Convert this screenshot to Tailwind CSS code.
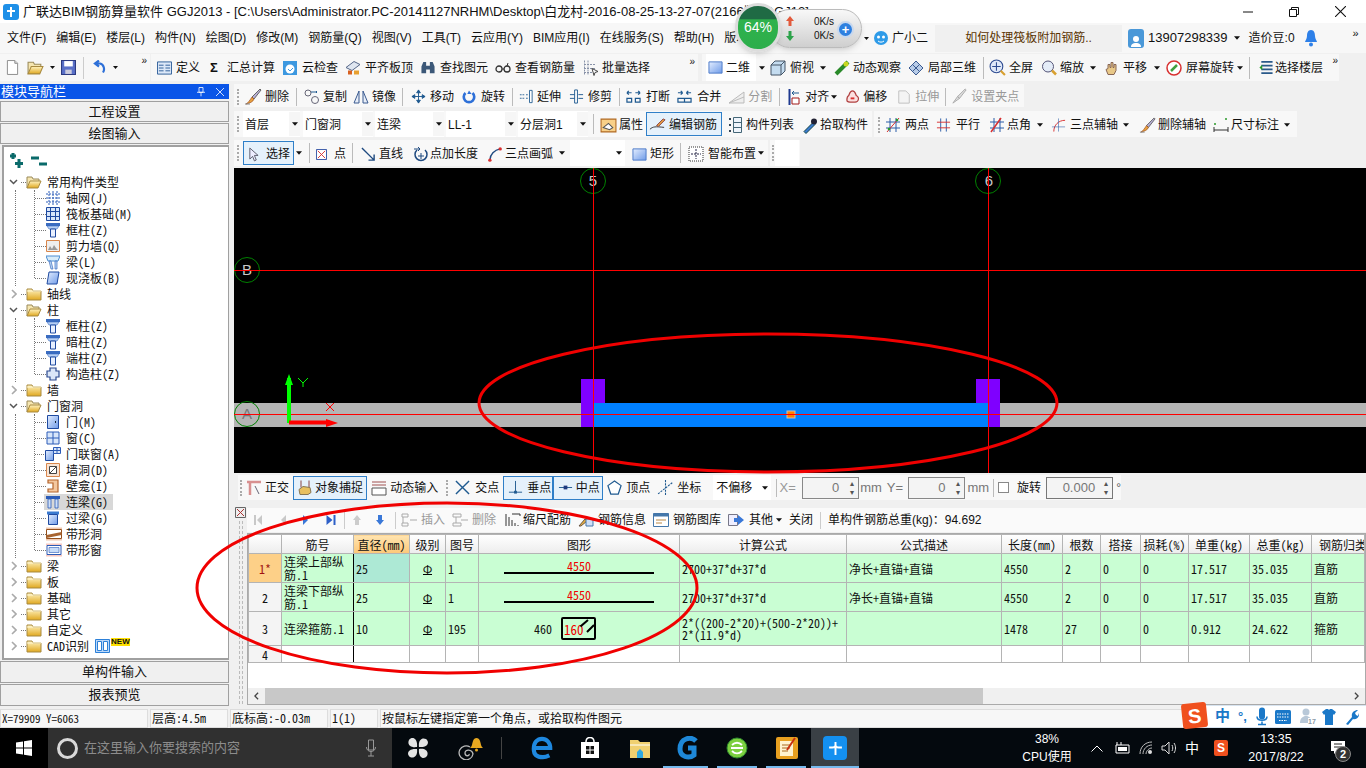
<!DOCTYPE html>
<html lang="zh">
<head>
<meta charset="UTF-8">
<title>广联达BIM钢筋算量软件 GGJ2013</title>
<script src="https://cdn.jsdelivr.net/npm/@tailwindcss/browser@4"></script>
</head>
<body class="bg-[#f0f0f0] overflow-hidden">
<!-- shared icons -->
<svg class="absolute w-0 h-0">
  <defs>
    <linearGradient id="fold" x1="0" y1="0" x2="0" y2="1"><stop offset="0" stop-color="#fff3c0"/><stop offset="1" stop-color="#e0a820"/></linearGradient>
    <linearGradient id="blu" x1="0" y1="0" x2="1" y2="1"><stop offset="0" stop-color="#e4eeff"/><stop offset="1" stop-color="#6f9be8"/></linearGradient>
  </defs>
  <symbol id="dd" viewBox="0 0 7 4"><path d="M0 0h7L3.500 4z" fill="#111"/></symbol>
  <symbol id="fo" viewBox="0 0 16 14"><path d="M1 13V2h5l1 2h6v2" fill="#f6e6b0" stroke="#9a8a5a"/><path d="M1 13l3-7h11l-3 7z" fill="url(#fold)" stroke="#a88a40"/></symbol>
  <symbol id="fc" viewBox="0 0 16 14"><path d="M1 13V2h5l1 2h8v9z" fill="url(#fold)" stroke="#a88a40"/><path d="M1 4h14" stroke="#fff6d0"/></symbol>
  <symbol id="cd" viewBox="0 0 9 6"><path d="M1 1l3.500 3.500L8 1" fill="none" stroke="#555" stroke-width="1.500"/></symbol>
  <symbol id="cr" viewBox="0 0 6 10"><path d="M1 1l4 4-4 4" fill="none" stroke="#aaa" stroke-width="1.600"/></symbol>
  <symbol id="t-col" viewBox="0 0 14 16"><path d="M0 1h14v3H0z" fill="#3a6cc0"/><path d="M1 4h12l-2 3H3z" fill="#b8d0f4" stroke="#3a6cc0" stroke-width=".6"/><path d="M4.500 7h5v8h-5z" fill="#e8f0ff" stroke="#1f4aa0"/></symbol>
  <symbol id="t-grid" viewBox="0 0 14 14"><path d="M3 0v14M7 0v14M11 0v14M0 3h14M0 7h14M0 11h14" stroke="#2c5cb8" stroke-dasharray="2 1"/></symbol>
  <symbol id="t-raft" viewBox="0 0 14 14"><path d="M.5.500h13v13H.5z" fill="#d8e6fa" stroke="#1f4aa0"/><path d="M4.500.5v13M9.500.5v13M.5 4.500h13M.5 9.500h13" stroke="#1f4aa0"/></symbol>
  <symbol id="t-wall" viewBox="0 0 14 14"><path d="M.5 1.500h13v11H.5z" fill="#eee" stroke="#d8864c"/><path d="M2 11l2-4 2 3 2-4 2 3 2 2z" fill="#999"/></symbol>
  <symbol id="t-beam" viewBox="0 0 14 15"><path d="M0 1h14l-2 5H2z" fill="#d8ecfa" stroke="#4a8cd0"/><path d="M3 6h2l2 8H5zM9 6h2v8H9z" fill="#bcd8f4" stroke="#3a6cc0" stroke-width=".7"/></symbol>
  <symbol id="t-slab" viewBox="0 0 14 14"><path d="M3 1h10l-2 12H1z" fill="url(#blu)" stroke="#1f4aa0"/></symbol>
  <symbol id="t-gzz" viewBox="0 0 14 14"><path d="M4 1h6v3h3v6h-3v3H4v-3H1V4h3z" fill="#dbe6f8" stroke="#2c4a90" stroke-width="1.200"/></symbol>
  <symbol id="t-door" viewBox="0 0 12 14"><path d="M.5.500h11v13H.5z" fill="url(#blu)" stroke="#1f4aa0"/><path d="M8.500 6v2" stroke="#123"/></symbol>
  <symbol id="t-win" viewBox="0 0 14 14"><path d="M1 1h12v12H1z" fill="#d8e6fa" stroke="#2c5cb8"/><path d="M7 1v12M1 7h12" stroke="#2c5cb8"/></symbol>
  <symbol id="t-dw" viewBox="0 0 16 14"><path d="M.5 3.500h8v10h-8z" fill="url(#blu)" stroke="#1f4aa0"/><path d="M8.500.5h7v6h-7zM12 .5v6M8.500 3.500h7" fill="#d8e6fa" stroke="#2c5cb8"/></symbol>
  <symbol id="t-hole" viewBox="0 0 14 14"><path d="M.5.500h13v13H.5z" fill="#f8e4d4" stroke="#d8864c"/><path d="M3.500 3.500h7v7h-7z" fill="#fff" stroke="#444"/><path d="M3.500 10.500l7-7" stroke="#444"/></symbol>
  <symbol id="t-niche" viewBox="0 0 12 14"><path d="M1 1h10v12H1V10h5V4H1z" fill="#f4c8a0" stroke="#b4642c" stroke-width="1.200"/></symbol>
  <symbol id="t-ll" viewBox="0 0 14 14"><path d="M0 1h14v3H0z" fill="#2c5cb8"/><path d="M2 4h3v9H2zM9 4h3v9H9z" fill="#cfe0f8" stroke="#2c5cb8" stroke-width=".8"/></symbol>
  <symbol id="t-gl" viewBox="0 0 12 14"><path d="M0 .5h12v3H0z" fill="#3a7ad0"/><path d="M1.500 3.500h9v10h-9z" fill="url(#blu)" stroke="#1f4aa0"/></symbol>
  <symbol id="t-sh" viewBox="0 0 16 14"><path d="M0 .5h16v2H0zM0 11.500h16v2H0z" fill="#f0c8b0"/><path d="M.5 2.500h15v9H.5z" fill="#fff" stroke="#94501c"/><path d="M.5 8l15-3v3l-15 3z" fill="#a86430"/></symbol>
  <symbol id="t-sw" viewBox="0 0 16 14"><path d="M0 .5h16v2H0zM0 11.500h16v2H0z" fill="#f8c8c0"/><path d="M1 2.500h14v9H1z" fill="#fff" stroke="#2c5cb8"/><path d="M3 4.500h10v5H3z" fill="#c8dcf8" stroke="#2c5cb8" stroke-width=".6"/></symbol>
  <symbol id="brush" viewBox="0 0 18 18"><path d="M16 1l1 1-7 9-2-2z" fill="#b8b0d8" stroke="#666"/><path d="M8 9l2 2c-1 3-4 4-8 5 2-1 4-4 6-7z" fill="#e8a040" stroke="#904010" stroke-width=".6"/><path d="M1 16h5" stroke="#888"/></symbol>
  <symbol id="plus2" viewBox="0 0 16 16"><circle cx="7" cy="7" r="6" fill="#dfe8f8" stroke="#2c4a90"/><path d="M7 3v8M3 7h8" stroke="#2c4a90"/><path d="M11 11l4 4" stroke="#d8a030" stroke-width="2"/></symbol>
  <symbol id="square" viewBox="0 0 16 16"><path d="M1 2h14v12H1z" fill="url(#blu)" stroke="#4a78c8"/></symbol>
</svg>

<div class="relative w-[1366px] h-[768px] overflow-hidden flex flex-col text-[12px] text-[#111] font-['Liberation_Sans','Noto_Sans_CJK_SC',sans-serif]">

  <!-- title bar -->
  <div class="h-[23px] bg-white flex items-center pl-[3px] shrink-0 text-[13px]">
    <span class="w-[16px] h-[16px] rounded-[3px] bg-[#1e90e8] flex items-center justify-center mr-[4px]">
      <svg viewBox="0 0 12 12" class="w-[12px] h-[12px]"><path d="M6 1v10M2 5h8" stroke="#fff" stroke-width="2" fill="none"/></svg>
    </span>
    <span class="whitespace-nowrap">广联达BIM钢筋算量软件 GGJ2013 - [C:\Users\Administrator.PC-20141127NRHM\Desktop\白龙村-2016-08-25-13-27-07(2166版本)GJ12]</span>
    <div class="ml-auto flex items-center gap-[36px] pr-[20px]">
      <svg viewBox="0 0 10 10" class="w-[10px] h-[10px]"><path d="M0 5h10" stroke="#111"/></svg>
      <svg viewBox="0 0 10 10" class="w-[10px] h-[10px]"><path d="M.5 2.500h7v7h-7zM2.500 2.500V.5h7v7h-2" fill="none" stroke="#111"/></svg>
      <svg viewBox="0 0 10 10" class="w-[11px] h-[11px]"><path d="M0 0l10 10M10 0L0 10" stroke="#111"/></svg>
    </div>
  </div>

  <!-- menu bar -->
  <div class="h-[30px] bg-[#f7f7f7] flex items-center shrink-0 pl-[7px] relative">
    <div class="flex gap-[10px] whitespace-nowrap">
      <span>文件(F)</span><span>编辑(E)</span><span>楼层(L)</span><span>构件(N)</span><span>绘图(D)</span><span>修改(M)</span><span>钢筋量(Q)</span><span>视图(V)</span><span>工具(T)</span><span>云应用(Y)</span><span>BIM应用(I)</span><span>在线服务(S)</span><span>帮助(H)</span><span>版本号(B)</span>
    </div>
    <div class="absolute left-[864px] top-0 h-full flex items-center whitespace-nowrap">
      <svg class="w-[5px] h-[3px] mr-[4px]"><use href="#dd"/></svg>
      <svg viewBox="0 0 16 16" class="w-[16px] h-[16px] mr-[3px]"><circle cx="8" cy="8" r="7" fill="#2e9be8"/><circle cx="5.500" cy="7" r="1.500" fill="#fff"/><circle cx="10.500" cy="7" r="1.500" fill="#fff"/><path d="M5 11c2 1.500 4 1.500 6 0" stroke="#fff" fill="none"/></svg>
      <span>广小二</span>
      <span class="ml-[7px] w-[187px] h-[27px] bg-[#f0f0f0] flex items-center justify-center text-[#5a3300]">如何处理筏板附加钢筋..</span>
      <span class="ml-[6px] w-[16px] h-[19px] rounded-[3px] bg-[#4a98d8] flex items-end justify-center"><svg viewBox="0 0 12 14" class="w-[12px] h-[14px]"><circle cx="6" cy="5" r="3" fill="#fff"/><path d="M1 13c0-3 2-4 5-4s5 1 5 4z" fill="#fff"/></svg></span>
      <span class="ml-[4px] text-[13px]">13907298339</span>
      <svg class="w-[6px] h-[4px] ml-[6px]"><use href="#dd"/></svg>
      <span class="ml-[9px]">造价豆:0</span>
      <svg viewBox="0 0 12 18" class="w-[12px] h-[18px] ml-[10px]"><path d="M6 1c3 0 4 3 4 6 0 3 2 5 2 6H0c0-1 2-3 2-6 0-3 1-6 4-6z" fill="#2e80e8"/><circle cx="6" cy="15.500" r="2" fill="#2e80e8"/></svg>
      <span class="ml-[36px] -mt-[10px] text-[11px]">»</span>
    </div>
  </div>

  <!-- main toolbar -->
  <div class="h-[29px] shrink-0 flex items-center gap-[1px] whitespace-nowrap">
    <div class="h-[27px] w-[150px] bg-[#f7f7f7] flex items-center pl-[6px] relative">
      <svg viewBox="0 0 14 16" class="w-[13px] h-[15px]"><path d="M1.500.5h8l3 3v12h-11z" fill="#fff" stroke="#888"/><path d="M9.500.5v3h3" fill="#ddd" stroke="#888"/></svg>
      <svg viewBox="0 0 16 14" class="w-[17px] h-[15px] ml-[8px]"><use href="#fo"/></svg>
      <svg class="w-[5px] h-[3px] ml-[6px]"><use href="#dd"/></svg>
      <svg viewBox="0 0 14 14" class="w-[15px] h-[15px] ml-[6px]"><path d="M.5.500h13v13H.5z" fill="#5a70c8" stroke="#2c3a80"/><path d="M3 1h8v5H3z" fill="#fff"/><path d="M4 9h6v4H4z" fill="#ccd"/></svg>
      <i class="w-px h-[22px] bg-[#ccc] ml-[7px]"></i>
      <svg viewBox="0 0 14 14" class="w-[14px] h-[15px] ml-[8px]"><path d="M11 12c2-3 1-8-3-9H4M7 0L3 3l4 3" fill="none" stroke="#2e70d8" stroke-width="2.200"/></svg>
      <svg class="w-[5px] h-[3px] ml-[7px]"><use href="#dd"/></svg>
      <span class="absolute right-[3px] top-[1px] text-[10px] leading-[12px]">»</span>
    </div>
    <div class="h-[27px] flex-1 max-w-[547px] bg-[#f7f7f7] flex items-center pl-[6px]">
      <span class="flex items-center gap-[4px]"><svg viewBox="0 0 16 14" class="w-[15px] h-[14px]"><path d="M.5.500h15v13H.5z" fill="#dce8f8" stroke="#2c5c98"/><path d="M2 4h5M2 7h5M2 10h5M9 4h5M9 7h5M9 10h5" stroke="#2c5c98"/></svg>定义</span>
      <span class="flex items-center gap-[8px] ml-[9px]"><b class="text-[13px] w-[10px] text-center">Σ</b>汇总计算</span>
      <span class="flex items-center gap-[4px] ml-[7px]"><svg viewBox="0 0 16 16" class="w-[16px] h-[16px]"><path d="M1 1h14v14H1z" fill="#3c98e0"/><circle cx="8" cy="9" r="4.500" fill="#fff"/><path d="M6 9l2 2 3-3" stroke="#3c98e0" fill="none"/></svg>云检查</span>
      <span class="flex items-center gap-[4px] ml-[7px]"><svg viewBox="0 0 16 16" class="w-[16px] h-[17px]"><path d="M1 8l8-6 6 3-8 6z" fill="#dfe6f0" stroke="#568"/><path d="M3 11h4v4H3z" fill="#d86020"/><path d="M9 11h5v4H9z" fill="#e8a030"/></svg>平齐板顶</span>
      <span class="flex items-center gap-[4px] ml-[7px]"><svg viewBox="0 0 16 16" class="w-[16px] h-[15px]"><path d="M1 14V7l2-5h3v12zM15 14V7l-2-5h-3v12zM6 6h4v4H6z" fill="#3c5878"/></svg>查找图元</span>
      <span class="flex items-center gap-[4px] ml-[7px]"><svg viewBox="0 0 16 12" class="w-[16px] h-[12px]"><circle cx="4" cy="7" r="3" fill="none" stroke="#333" stroke-width="1.300"/><circle cx="12" cy="7" r="3" fill="none" stroke="#333" stroke-width="1.300"/><path d="M7 7h2M12 4l1-3" stroke="#333"/></svg>查看钢筋量</span>
      <span class="flex items-center gap-[3px] ml-[8px]"><svg viewBox="0 0 16 16" class="w-[16px] h-[17px]"><path d="M1.500 1v14M5 1v14M1 5h12M1 9h12M1 13h8" stroke="#8892a8" stroke-dasharray="2 1"/><path d="M9 9l6 3-3 1-1 3z" fill="#fff" stroke="#444"/></svg>批量选择</span>
      <span class="ml-auto mr-[3px] -mt-[11px] text-[10px] leading-[12px]">»</span>
    </div>
    <div class="h-[27px] w-[637px] ml-[3px] bg-[#f7f7f7] flex items-center pl-[4px] relative">
      <span class="flex items-center gap-[3px] bg-white h-[27px] pl-[2px] w-[50px]"><svg class="w-[15px] h-[15px]"><use href="#square"/></svg>二维</span>
      <svg class="w-[6px] h-[4px] ml-[3px]"><use href="#dd"/></svg>
      <span class="flex items-center gap-[4px] ml-[5px]"><svg viewBox="0 0 16 16" class="w-[16px] h-[16px]"><path d="M1 5l4-4h10v10l-4 4H1z" fill="#c4dcf0" stroke="#456"/><path d="M1 5h10v10M11 5l4-4" fill="none" stroke="#456"/></svg>俯视</span>
      <svg class="w-[6px] h-[4px] ml-[6px]"><use href="#dd"/></svg>
      <span class="flex items-center gap-[3px] ml-[8px]"><svg viewBox="0 0 16 16" class="w-[16px] h-[16px]"><path d="M2 14L14 2" stroke="#2a8a2a" stroke-width="4"/><circle cx="12" cy="4" r="2.500" fill="#c8d820"/></svg>动态观察</span>
      <span class="flex items-center gap-[4px] ml-[7px]"><svg viewBox="0 0 16 16" class="w-[16px] h-[16px]"><path d="M8 1l7 7-7 7-7-7z" fill="#b8cce8" stroke="#3a5a90"/><path d="M4 4l8 8M12 4l-8 8" stroke="#3a5a90"/></svg>局部三维</span>
      <i class="w-px h-[22px] bg-[#bbb] ml-[7px]"></i>
      <span class="flex items-center gap-[3px] ml-[5px]"><svg class="w-[17px] h-[17px]"><use href="#plus2"/></svg>全屏</span>
      <span class="flex items-center gap-[3px] ml-[8px]"><svg viewBox="0 0 16 16" class="w-[16px] h-[17px]"><circle cx="7" cy="7" r="5.500" fill="#e4ecf8" stroke="#557"/><path d="M11 11l4 4" stroke="#d8a030" stroke-width="2.500"/></svg>缩放</span>
      <svg class="w-[6px] h-[4px] ml-[6px]"><use href="#dd"/></svg>
      <span class="flex items-center gap-[3px] ml-[8px]"><svg viewBox="0 0 16 16" class="w-[16px] h-[17px]"><path d="M4 15l-2-5 2-1V5h2v3h1V3h2v5h1V5h2v6l-2 4z" fill="#e8c888" stroke="#865"/></svg>平移</span>
      <svg class="w-[6px] h-[4px] ml-[7px]"><use href="#dd"/></svg>
      <span class="flex items-center gap-[4px] ml-[6px]"><svg viewBox="0 0 16 16" class="w-[16px] h-[16px]"><circle cx="8" cy="8" r="7" fill="#fff" stroke="#d83030" stroke-width="1.500"/><path d="M5 11l6-6" stroke="#40a040" stroke-width="2.500"/></svg>屏幕旋转</span>
      <svg class="w-[6px] h-[4px] ml-[3px]"><use href="#dd"/></svg>
      <i class="w-px h-[22px] bg-[#bbb] ml-[6px]"></i>
      <span class="flex items-center gap-[1px] ml-[8px]"><svg viewBox="0 0 16 16" class="w-[16px] h-[15px]"><path d="M3 2h12M3 6h12M3 10h12M3 14h12" stroke="#2a5a8a" stroke-width="2"/><path d="M1 8l3-3v6z" fill="#2a9a2a"/></svg>选择楼层</span>
      <span class="absolute right-[1px] top-[1px] text-[10px] leading-[12px]">»</span>
    </div>
  </div>
  <div class="h-[2px] shrink-0"></div>

  <!-- work area -->
  <div class="h-[622px] shrink-0 flex">
    <!-- navigation pane -->
    <div class="w-[234px] shrink-0 pr-[5px] flex flex-col">
      <div class="h-[15px] bg-[#0a55e8] text-white flex items-center pl-[1px] leading-none text-[13px] shrink-0">
        <span>模块导航栏</span>
        <svg viewBox="0 0 10 12" class="w-[8px] h-[11px] ml-auto"><path d="M2.500 1h5v6h-5zM0 7h10M5 7v5" fill="none" stroke="#fff"/></svg>
        <svg viewBox="0 0 10 10" class="w-[8px] h-[8px] ml-[11px] mr-[5px]"><path d="M0 0l10 10M10 0L0 10" stroke="#fff"/></svg>
      </div>
      <div class="mt-[2px] h-[21px] shrink-0 bg-[#f0f0f0] border border-[#a0a0a0] flex items-center justify-center text-[13px]">工程设置</div>
      <div class="mt-[1px] h-[21px] shrink-0 bg-[#f0f0f0] border border-[#a0a0a0] flex items-center justify-center text-[13px]">绘图输入</div>
      <div class="mt-[1px] ml-[2px] flex-1 bg-white border-2 border-[#a0a0a0] border-r-[1.500px] font-['Noto_Sans_Mono_CJK_SC','Noto_Sans_CJK_SC',monospace]">
        <div class="h-[27px] flex items-center pl-[4px] gap-[7px]">
          <svg viewBox="0 0 16 16" class="w-[16px] h-[16px]"><path d="M5 0v6M2 3h6M11 6v9M7 10.500h8" stroke="#0a6a6a" stroke-width="3"/></svg>
          <svg viewBox="0 0 16 16" class="w-[16px] h-[16px]"><path d="M0 5h8M8 11h8" stroke="#0a6a6a" stroke-width="3"/></svg>
        </div>
        <div class="pl-[4px]">
          <div class="h-4 flex items-center"><svg class="w-[9px] h-[6px] ml-[1px]"><use href="#cd"/></svg><i class="w-[5px] border-t border-dotted border-[#777] ml-[3px]"></i><svg class="w-[16px] h-[14px]"><use href="#fo"/></svg><span class="ml-[5px]">常用构件类型</span></div>
          <div class="relative ml-[27px]">
            <i class="absolute -left-[20px] top-0 bottom-0 border-l border-dotted border-[#777]"></i>
            <i class="absolute left-[-1px] top-0 bottom-2 border-l border-dotted border-[#777]"></i>
            <div class="h-4 flex items-center"><i class="w-[11px] border-t border-dotted border-[#777]"></i><svg class="w-[14px] h-[14px]"><use href="#t-grid"/></svg><span class="ml-[6px]">轴网(J)</span></div>
            <div class="h-4 flex items-center"><i class="w-[11px] border-t border-dotted border-[#777]"></i><svg class="w-[14px] h-[14px]"><use href="#t-raft"/></svg><span class="ml-[6px]">筏板基础(M)</span></div>
            <div class="h-4 flex items-center"><i class="w-[11px] border-t border-dotted border-[#777]"></i><svg class="w-[14px] h-[16px]"><use href="#t-col"/></svg><span class="ml-[6px]">框柱(Z)</span></div>
            <div class="h-4 flex items-center"><i class="w-[11px] border-t border-dotted border-[#777]"></i><svg class="w-[14px] h-[14px]"><use href="#t-wall"/></svg><span class="ml-[6px]">剪力墙(Q)</span></div>
            <div class="h-4 flex items-center"><i class="w-[11px] border-t border-dotted border-[#777]"></i><svg class="w-[14px] h-[15px]"><use href="#t-beam"/></svg><span class="ml-[6px]">梁(L)</span></div>
            <div class="h-4 flex items-center"><i class="w-[11px] border-t border-dotted border-[#777]"></i><svg class="w-[14px] h-[14px]"><use href="#t-slab"/></svg><span class="ml-[6px]">现浇板(B)</span></div>
          </div>
          <div class="h-4 flex items-center"><svg class="w-[6px] h-[10px] ml-[3px]"><use href="#cr"/></svg><i class="w-[5px] border-t border-dotted border-[#777] ml-[4px]"></i><svg class="w-[16px] h-[14px]"><use href="#fc"/></svg><span class="ml-[5px]">轴线</span></div>
          <div class="h-4 flex items-center"><svg class="w-[9px] h-[6px] ml-[1px]"><use href="#cd"/></svg><i class="w-[5px] border-t border-dotted border-[#777] ml-[3px]"></i><svg class="w-[16px] h-[14px]"><use href="#fo"/></svg><span class="ml-[5px]">柱</span></div>
          <div class="relative ml-[27px]">
            <i class="absolute -left-[20px] top-0 bottom-0 border-l border-dotted border-[#777]"></i>
            <i class="absolute left-[-1px] top-0 bottom-2 border-l border-dotted border-[#777]"></i>
            <div class="h-4 flex items-center"><i class="w-[11px] border-t border-dotted border-[#777]"></i><svg class="w-[14px] h-[16px]"><use href="#t-col"/></svg><span class="ml-[6px]">框柱(Z)</span></div>
            <div class="h-4 flex items-center"><i class="w-[11px] border-t border-dotted border-[#777]"></i><svg class="w-[14px] h-[16px]"><use href="#t-col"/></svg><span class="ml-[6px]">暗柱(Z)</span></div>
            <div class="h-4 flex items-center"><i class="w-[11px] border-t border-dotted border-[#777]"></i><svg class="w-[14px] h-[16px]"><use href="#t-col"/></svg><span class="ml-[6px]">端柱(Z)</span></div>
            <div class="h-4 flex items-center"><i class="w-[11px] border-t border-dotted border-[#777]"></i><svg class="w-[14px] h-[14px]"><use href="#t-gzz"/></svg><span class="ml-[6px]">构造柱(Z)</span></div>
          </div>
          <div class="h-4 flex items-center"><svg class="w-[6px] h-[10px] ml-[3px]"><use href="#cr"/></svg><i class="w-[5px] border-t border-dotted border-[#777] ml-[4px]"></i><svg class="w-[16px] h-[14px]"><use href="#fc"/></svg><span class="ml-[5px]">墙</span></div>
          <div class="h-4 flex items-center"><svg class="w-[9px] h-[6px] ml-[1px]"><use href="#cd"/></svg><i class="w-[5px] border-t border-dotted border-[#777] ml-[3px]"></i><svg class="w-[16px] h-[14px]"><use href="#fo"/></svg><span class="ml-[5px]">门窗洞</span></div>
          <div class="relative ml-[27px]">
            <i class="absolute -left-[20px] top-0 bottom-0 border-l border-dotted border-[#777]"></i>
            <i class="absolute left-[-1px] top-0 bottom-2 border-l border-dotted border-[#777]"></i>
            <div class="h-4 flex items-center"><i class="w-[11px] border-t border-dotted border-[#777]"></i><svg class="w-[14px] h-[14px]"><use href="#t-door"/></svg><span class="ml-[6px]">门(M)</span></div>
            <div class="h-4 flex items-center"><i class="w-[11px] border-t border-dotted border-[#777]"></i><svg class="w-[14px] h-[14px]"><use href="#t-win"/></svg><span class="ml-[6px]">窗(C)</span></div>
            <div class="h-4 flex items-center"><i class="w-[11px] border-t border-dotted border-[#777]"></i><svg class="w-[16px] h-[14px] -ml-[1px] -mr-[1px]"><use href="#t-dw"/></svg><span class="ml-[6px]">门联窗(A)</span></div>
            <div class="h-4 flex items-center"><i class="w-[11px] border-t border-dotted border-[#777]"></i><svg class="w-[14px] h-[14px]"><use href="#t-hole"/></svg><span class="ml-[6px]">墙洞(D)</span></div>
            <div class="h-4 flex items-center"><i class="w-[11px] border-t border-dotted border-[#777]"></i><svg class="w-[14px] h-[14px]"><use href="#t-niche"/></svg><span class="ml-[6px]">壁龛(I)</span></div>
            <div class="h-4 flex items-center"><i class="w-[9px] border-t border-dotted border-[#777]"></i><span class="flex items-center bg-[#d8d8d8] h-4 pl-[2px] pr-[5px]"><svg class="w-[14px] h-[14px]"><use href="#t-ll"/></svg><span class="ml-[6px]">连梁(G)</span></span></div>
            <div class="h-4 flex items-center"><i class="w-[11px] border-t border-dotted border-[#777]"></i><svg class="w-[14px] h-[14px]"><use href="#t-gl"/></svg><span class="ml-[6px]">过梁(G)</span></div>
            <div class="h-4 flex items-center"><i class="w-[11px] border-t border-dotted border-[#777]"></i><svg class="w-[16px] h-[14px] -mr-[2px]"><use href="#t-sh"/></svg><span class="ml-[6px]">带形洞</span></div>
            <div class="h-4 flex items-center"><i class="w-[11px] border-t border-dotted border-[#777]"></i><svg class="w-[16px] h-[14px] -mr-[2px]"><use href="#t-sw"/></svg><span class="ml-[6px]">带形窗</span></div>
          </div>
          <div class="h-4 flex items-center"><svg class="w-[6px] h-[10px] ml-[3px]"><use href="#cr"/></svg><i class="w-[5px] border-t border-dotted border-[#777] ml-[4px]"></i><svg class="w-[16px] h-[14px]"><use href="#fc"/></svg><span class="ml-[5px]">梁</span></div>
          <div class="h-4 flex items-center"><svg class="w-[6px] h-[10px] ml-[3px]"><use href="#cr"/></svg><i class="w-[5px] border-t border-dotted border-[#777] ml-[4px]"></i><svg class="w-[16px] h-[14px]"><use href="#fc"/></svg><span class="ml-[5px]">板</span></div>
          <div class="h-4 flex items-center"><svg class="w-[6px] h-[10px] ml-[3px]"><use href="#cr"/></svg><i class="w-[5px] border-t border-dotted border-[#777] ml-[4px]"></i><svg class="w-[16px] h-[14px]"><use href="#fc"/></svg><span class="ml-[5px]">基础</span></div>
          <div class="h-4 flex items-center"><svg class="w-[6px] h-[10px] ml-[3px]"><use href="#cr"/></svg><i class="w-[5px] border-t border-dotted border-[#777] ml-[4px]"></i><svg class="w-[16px] h-[14px]"><use href="#fc"/></svg><span class="ml-[5px]">其它</span></div>
          <div class="h-4 flex items-center"><svg class="w-[6px] h-[10px] ml-[3px]"><use href="#cr"/></svg><i class="w-[5px] border-t border-dotted border-[#777] ml-[4px]"></i><svg class="w-[16px] h-[14px]"><use href="#fc"/></svg><span class="ml-[5px]">自定义</span></div>
          <div class="h-4 flex items-center"><svg class="w-[6px] h-[10px] ml-[3px]"><use href="#cr"/></svg><i class="w-[5px] border-t border-dotted border-[#777] ml-[4px]"></i><svg class="w-[16px] h-[14px]"><use href="#fc"/></svg><span class="ml-[5px]">CAD识别</span>
            <svg viewBox="0 0 15 14" class="w-[15px] h-[14px] ml-[6px]"><path d="M.5.500h14v13H.5z" fill="#bcd8f8" stroke="#2c80d8"/><path d="M2.500 2.500h4v9h-4zM8.500 2.500h4v9h-4z" fill="#fff" stroke="#2c80d8"/></svg>
            <span class="bg-[#ffe000] text-[8px] leading-[8px] font-bold ml-[1px] -mt-[8px] font-['Liberation_Sans']">NEW</span>
          </div>
        </div>
      </div>
      <div class="mt-[1px] h-[22px] shrink-0 bg-[#f0f0f0] border border-[#a0a0a0] flex items-center justify-center text-[13px]">单构件输入</div>
      <div class="mt-[1px] h-[22px] shrink-0 bg-[#f0f0f0] border border-[#a0a0a0] flex items-center justify-center text-[13px]">报表预览</div>
    </div>

    <!-- right side -->
    <div class="flex-1 flex flex-col whitespace-nowrap min-w-0">
      <div class="h-[23px] w-[790px] shrink-0 bg-[#f8f8f8] flex items-center pl-[3px] pt-[2px]">
        <i class="h-[16px] border-l-2 border-dotted border-[#aaa]"></i>
        <span class="flex items-center gap-[3px] ml-[5px]"><svg class="w-[18px] h-[18px]"><use href="#brush"/></svg>删除</span>
        <i class="w-px h-[18px] bg-[#bbb] ml-[7px]"></i>
        <span class="flex items-center gap-[3px] ml-[7px]"><svg viewBox="0 0 16 16" class="w-[16px] h-[16px]"><circle cx="4" cy="4" r="3" fill="none" stroke="#667"/><circle cx="11" cy="11" r="3.500" fill="none" stroke="#667"/><path d="M7 3h6l-1-1M13 3l-1 1" fill="none" stroke="#1f5a90"/></svg>复制</span>
        <span class="flex items-center gap-[3px] ml-[6px]"><svg viewBox="0 0 16 16" class="w-[16px] h-[16px]"><path d="M6 2L1 14h5zM10 2l5 12h-5z" fill="#e8eef8" stroke="#3a5a90"/></svg>镜像</span>
        <i class="w-px h-[18px] bg-[#bbb] ml-[6px]"></i>
        <span class="flex items-center gap-[4px] ml-[8px]"><svg viewBox="0 0 16 16" class="w-[15px] h-[15px]"><path d="M8 1v14M1 8h14M8 1L6 4h4zM8 15l-2-3h4zM1 8l3-2v4zM15 8l-3-2v4z" fill="#1f5a90" stroke="#1f5a90"/></svg>移动</span>
        <span class="flex items-center gap-[5px] ml-[8px]"><svg viewBox="0 0 16 16" class="w-[14px] h-[15px]"><path d="M4 4a6 6 0 1 0 8 0" fill="none" stroke="#2e70d8" stroke-width="3"/><path d="M8 1l3 4H6z" fill="#2e70d8"/></svg>旋转</span>
        <i class="w-px h-[18px] bg-[#bbb] ml-[7px]"></i>
        <span class="flex items-center gap-[4px] ml-[6px]"><svg viewBox="0 0 16 16" class="w-[14px] h-[15px]"><path d="M12 1h3v14h-3z" fill="#fff" stroke="#1f5a90"/><path d="M1 6h6M1 10h6M8 6h3M8 10h3" stroke="#1f5a90" stroke-dasharray="2 1"/></svg>延伸</span>
        <span class="flex items-center gap-[4px] ml-[8px]"><svg viewBox="0 0 16 16" class="w-[15px] h-[15px]"><path d="M6 1h3v14H6z" fill="#fff" stroke="#1f5a90"/><path d="M1 6h5M1 10h5M10 6h5M10 10h5" stroke="#1f5a90"/></svg>修剪</span>
        <i class="w-px h-[18px] bg-[#bbb] ml-[7px]"></i>
        <span class="flex items-center gap-[5px] ml-[6px]"><svg viewBox="0 0 16 16" class="w-[15px] h-[15px]"><path d="M1 4h5M10 4h5M1 4l2-2M1 4l2 2M15 4l-2-2M15 4l-2 2M1 10h5v4H1zM10 10h5v4h-5z" fill="none" stroke="#1f5a90" stroke-width="1.300"/></svg>打断</span>
        <span class="flex items-center gap-[5px] ml-[7px]"><svg viewBox="0 0 16 16" class="w-[15px] h-[15px]"><path d="M1 4h5M10 4h5M6 4L4 2M6 4L4 6M10 4l2-2M10 4l2 2M1 10h14v4H1zM8 10v4" fill="none" stroke="#1f5a90" stroke-width="1.300"/></svg>合并</span>
        <span class="flex items-center gap-[2px] ml-[7px] text-[#999]"><svg viewBox="0 0 18 16" class="w-[18px] h-[16px]"><path d="M1 14L16 3v11zM1 14l15-6" fill="#eee" stroke="#bbb"/></svg>分割</span>
        <i class="w-px h-[18px] bg-[#bbb] ml-[7px]"></i>
        <span class="flex items-center gap-[5px] ml-[8px]"><svg viewBox="0 0 12 16" class="w-[12px] h-[16px]"><path d="M1.500 0v16" stroke="#1f3a90" stroke-width="2"/><path d="M4 9h7v6H4z" fill="#fff" stroke="#a01818"/><path d="M4 4h7M4 4l2-2M4 4l2 2" fill="none" stroke="#1f5a90"/></svg>对齐</span>
        <svg class="w-[6px] h-[4px] ml-[2px]"><use href="#dd"/></svg>
        <span class="flex items-center gap-[3px] ml-[8px]"><svg viewBox="0 0 16 16" class="w-[15px] h-[15px]"><path d="M8 2c3 0 3 3 4 5 2 1 3 3 2 5s-2 2-6 2-6 0-6-2 0-4 2-5c1-2 1-5 4-5z" fill="#fbe0e0" stroke="#b04040" stroke-width="1.300"/><path d="M6 10h4" stroke="#d83030" stroke-width="2"/></svg>偏移</span>
        <span class="flex items-center gap-[4px] ml-[10px] text-[#999]"><svg viewBox="0 0 16 16" class="w-[14px] h-[16px]"><path d="M2 1h8l4 4v10H2z" fill="#f4f4f4" stroke="#bbb"/></svg>拉伸</span>
        <i class="w-px h-[18px] bg-[#bbb] ml-[6px]"></i>
        <span class="flex items-center gap-[3px] ml-[5px] text-[#999]"><svg viewBox="0 0 18 18" class="w-[17px] h-[17px]"><path d="M15 1l1 1-7 9-2-2zM7 9l2 2-7 5z" fill="#ddd" stroke="#aaa"/></svg>设置夹点</span>
      </div>

      <!-- row 2 -->
      <div class="h-[26px] shrink-0 mt-[4px] flex">
        <div class="w-[638px] bg-[#f8f8f8] flex items-center pl-[3px]">
          <i class="h-[16px] border-l-2 border-dotted border-[#aaa] mr-[4px]"></i>
          <span class="w-[57px] h-[26px] bg-white flex items-center pl-[2px] justify-between pt-[2px]">首层<span class="w-[11px] h-[24px] -mt-[2px] bg-[#f6f6f6] flex items-center justify-center"><svg class="w-[6px] h-[4px]"><use href="#dd"/></svg></span></span>
          <span class="w-[70px] h-[26px] bg-white flex items-center pl-[2px] justify-between ml-[3px] pt-[2px]">门窗洞<span class="w-[11px] h-[24px] -mt-[2px] bg-[#f6f6f6] flex items-center justify-center"><svg class="w-[6px] h-[4px]"><use href="#dd"/></svg></span></span>
          <span class="w-[69px] h-[26px] bg-white flex items-center pl-[2px] justify-between ml-[2px] pt-[2px]">连梁<span class="w-[11px] h-[24px] -mt-[2px] bg-[#f6f6f6] flex items-center justify-center"><svg class="w-[6px] h-[4px]"><use href="#dd"/></svg></span></span>
          <span class="w-[70px] h-[26px] bg-white flex items-center pl-[2px] justify-between ml-[2px] pt-[2px]">LL-1<span class="w-[11px] h-[24px] -mt-[2px] bg-[#f6f6f6] flex items-center justify-center"><svg class="w-[6px] h-[4px]"><use href="#dd"/></svg></span></span>
          <span class="w-[70px] h-[26px] bg-white flex items-center pl-[2px] justify-between ml-[2px] pt-[2px]">分层洞1<span class="w-[11px] h-[24px] -mt-[2px] bg-[#f6f6f6] flex items-center justify-center"><svg class="w-[6px] h-[4px]"><use href="#dd"/></svg></span></span>
          <i class="w-px h-[20px] bg-[#bbb] ml-[5px]"></i>
          <span class="flex items-center gap-[2px] ml-[6px] pt-[2px]"><svg viewBox="0 0 16 16" class="w-[17px] h-[17px]"><path d="M1 2h14v12H1z" fill="#f8d088" stroke="#b06820"/><path d="M3 10l5-4 4 4-3 2z" fill="#fff" stroke="#555"/></svg>属性</span>
          <span class="flex items-center gap-[3px] ml-[3px] w-[76px] h-[24px] bg-[#e5f1fb] border border-[#2f7fc8] pl-[2px] pt-[2px]"><svg viewBox="0 0 18 18" class="w-[17px] h-[17px] shrink-0"><path d="M1 13c3-3 6-3 15-2" fill="none" stroke="#333"/><path d="M8 9l7-7 2 1-7 7z" fill="#e8a040" stroke="#844"/></svg>编辑钢筋</span>
          <span class="flex items-center gap-[3px] ml-[5px] pt-[2px]"><svg viewBox="0 0 16 16" class="w-[16px] h-[16px]"><path d="M2 1h2v2H2zM2 7h2v2H2zM2 13h2v2H2z" fill="#345"/><path d="M6.500.5h8v15h-8zM6.500 5.500h8M6.500 10.500h8" fill="#eef4fb" stroke="#467"/></svg>构件列表</span>
          <span class="flex items-center gap-[2px] ml-[8px] pt-[2px]"><svg viewBox="0 0 16 16" class="w-[16px] h-[17px]"><path d="M2 14l9-9 2 2-9 9z" fill="#3a7ad0" stroke="#144"/><circle cx="12" cy="4" r="3" fill="#223"/></svg>拾取构件</span>
        </div>
        <div class="w-[423px] ml-[2px] bg-[#f8f8f8] flex items-center pl-[4px] pt-[2px]">
          <i class="h-[16px] border-l-2 border-dotted border-[#aaa]"></i>
          <span class="flex items-center gap-[4px] ml-[5px]"><svg viewBox="0 0 16 16" class="w-[16px] h-[16px]"><path d="M1 5h14M1 11h14M5 1v14M11 1v14" stroke="#2a5ca8"/><path d="M2 15L14 1" stroke="#d83030"/><circle cx="4" cy="12" r="1.300" fill="#2a9a2a"/><circle cx="12" cy="3" r="1.300" fill="#2a9a2a"/></svg>两点</span>
          <span class="flex items-center gap-[5px] ml-[7px]"><svg viewBox="0 0 16 16" class="w-[15px] h-[16px]"><path d="M5 1v14M11 1v14" stroke="#2a5ca8"/><path d="M1 5h14M1 11h14" stroke="#d83030"/></svg>平行</span>
          <span class="flex items-center gap-[2px] ml-[9px]"><svg viewBox="0 0 16 16" class="w-[16px] h-[16px]"><path d="M5 1v14M11 1v14M1 5h14M1 11h14" stroke="#2a5ca8"/><path d="M2 15L12 1" stroke="#d83030" stroke-width="1.500"/></svg>点角</span>
          <svg class="w-[6px] h-[4px] ml-[6px]"><use href="#dd"/></svg>
          <span class="flex items-center gap-[4px] ml-[8px]"><svg viewBox="0 0 16 16" class="w-[15px] h-[16px]"><path d="M3 15C3 8 8 3 15 3" fill="none" stroke="#d83030"/><path d="M1 10h14M8 1v14" stroke="#2a5ca8" stroke-width=".6"/></svg>三点辅轴</span>
          <svg class="w-[6px] h-[4px] ml-[5px]"><use href="#dd"/></svg>
          <span class="flex items-center gap-[2px] ml-[10px]"><svg class="w-[17px] h-[17px]"><use href="#brush"/></svg>删除辅轴</span>
          <span class="flex items-center gap-[2px] ml-[7px]"><svg viewBox="0 0 16 16" class="w-[16px] h-[16px]"><path d="M1 10v5M15 10v5M1 13h14" stroke="#333"/><circle cx="2" cy="7" r="1" fill="#2a9a2a"/><circle cx="13" cy="2" r="1" fill="#2a9a2a"/></svg>尺寸标注</span>
          <svg class="w-[6px] h-[4px] ml-[5px]"><use href="#dd"/></svg>
        </div>
      </div>

      <!-- row 3 -->
      <div class="h-[26px] shrink-0 mt-[3px] flex">
        <div class="w-[534px] bg-[#f8f8f8] flex items-center pl-[3px]">
          <i class="h-[16px] border-l-2 border-dotted border-[#aaa]"></i>
          <span class="flex items-center gap-[7px] ml-[4px] w-[51px] h-[24px] bg-[#e5f1fb] border border-[#2f7fc8] pl-[4px] pt-[2px]"><svg viewBox="0 0 12 16" class="w-[11px] h-[15px] shrink-0"><path d="M2 1v12l3-3 2 5 2-1-2-5h4z" fill="#eef" stroke="#556"/></svg>选择</span>
          <svg class="w-[6px] h-[4px] ml-[2px]"><use href="#dd"/></svg>
          <i class="w-px h-[20px] bg-[#bbb] ml-[7px]"></i>
          <span class="flex items-center gap-[7px] ml-[6px] pt-[2px]"><svg viewBox="0 0 12 12" class="w-[11px] h-[11px]"><path d="M.5.500h11v11H.5z" fill="#fff" stroke="#2a4aa0"/><path d="M2 2l8 8M10 2l-8 8" stroke="#d83030"/></svg>点</span>
          <i class="w-px h-[20px] bg-[#bbb] ml-[6px]"></i>
          <span class="flex items-center gap-[3px] ml-[8px] pt-[2px]"><svg viewBox="0 0 16 16" class="w-[15px] h-[15px]"><path d="M1 1l13 13M14 8v6H8" fill="none" stroke="#1f4a80" stroke-width="1.500"/></svg>直线</span>
          <span class="flex items-center gap-[1px] ml-[10px] pt-[2px]"><svg viewBox="0 0 16 16" class="w-[16px] h-[16px]"><path d="M4 4a6 6 0 1 0 8 0" fill="none" stroke="#1f4a80" stroke-width="1.500"/><path d="M1 3h6l-2-2M7 3L5 5M8 7v6M5 10h6" fill="none" stroke="#1f4a80"/></svg>点加长度</span>
          <span class="flex items-center gap-[2px] ml-[10px] pt-[2px]"><svg viewBox="0 0 16 16" class="w-[15px] h-[15px]"><path d="M2 14C2 8 7 3 13 2" fill="none" stroke="#1f4a80" stroke-width="1.500"/><circle cx="2" cy="14" r="1.800" fill="#d83030"/><circle cx="13" cy="2" r="1.800" fill="#d83030"/></svg>三点画弧</span>
          <svg class="w-[6px] h-[4px] ml-[6px]"><use href="#dd"/></svg>
          <span class="w-[55px] h-[26px] bg-white ml-[5px] flex items-center justify-end pr-[3px]"><svg class="w-[6px] h-[4px]"><use href="#dd"/></svg></span>
          <span class="flex items-center gap-[3px] ml-[7px] pt-[2px]"><svg class="w-[15px] h-[15px]"><use href="#square"/></svg>矩形</span>
          <i class="w-px h-[20px] bg-[#bbb] ml-[6px]"></i>
          <span class="flex items-center gap-[4px] ml-[7px] pt-[2px]"><svg viewBox="0 0 16 16" class="w-[16px] h-[16px]"><path d="M1 1h14v14H1z" fill="#fff" stroke="#333" stroke-dasharray="1 1"/><path d="M8 3v10M3 8h10" stroke="#224" stroke-dasharray="2 1"/></svg>智能布置</span>
          <svg class="w-[6px] h-[4px] ml-[2px]"><use href="#dd"/></svg>
        </div>
        <div class="w-[30px] ml-[2px] bg-[#f8f8f8] flex items-center pl-[2px]">
          <i class="h-[16px] border-l-2 border-dotted border-[#aaa]"></i>
          <span class="w-[24px] h-[26px] bg-white ml-[1px]"></span>
        </div>
      </div>

      <div class="h-[305px] shrink-0 mt-[2px] bg-black">
        <svg viewBox="234 168 1132 305" class="w-[1132px] h-[305px] block">
          <rect x="234" y="403" width="1132" height="24" fill="#b4b4b4"/>
          <rect x="581" y="379" width="24" height="48" fill="#7f00ff"/>
          <rect x="976" y="379" width="24" height="48" fill="#7f00ff"/>
          <rect x="593" y="403" width="396" height="24" fill="#0080ff"/>
          <rect x="787" y="411" width="8" height="7" fill="#ff8000" stroke="#c0c0c0"/>
          <g fill="none" stroke="#008000"><circle cx="593" cy="181" r="12.500"/><circle cx="988" cy="181" r="12.500"/><circle cx="247" cy="270" r="12.500"/><circle cx="247" cy="414" r="12.500"/></g>
          <g fill="#c8c8c8" font-size="15" text-anchor="middle" font-family="Liberation Sans"><text x="593" y="186">5</text><text x="989" y="186">6</text><text x="247" y="275">B</text><text x="247" y="419" fill="#777">A</text></g>
          <path d="M593.500 168V473M988.500 168V473" stroke="#ff0000"/>
          <path d="M234 270.500H1366M234 414.500H1366" stroke="#ff0000"/>
          <path d="M289 423V378" stroke="#00ff00" stroke-width="4"/><path d="M289 374l-4 11h8z" fill="#00ff00"/>
          <path d="M289 422.500H330" stroke="#ff0000" stroke-width="4"/><path d="M338 423l-12-4v8z" fill="#ff0000"/>
          <path d="M298 378l5 5 5-5M303 383v4" stroke="#00ff00" fill="none"/>
          <path d="M326 403l8 8M334 403l-8 8" stroke="#ff0000"/>
        </svg>
      </div>

      <!-- snap toolbar -->
      <div class="h-[25px] shrink-0 mt-[2px] ml-[4px] w-[883px] bg-[#f8f8f8] flex items-center pl-[2px]">
        <i class="h-[16px] border-l-2 border-dotted border-[#aaa]"></i>
        <span class="flex items-center gap-[3px] ml-[4px]"><svg viewBox="0 0 16 16" class="w-[16px] h-[16px]"><path d="M1 2h14M4 2v13" stroke="#d89090" stroke-width="2.500"/><path d="M9 6l4 8" stroke="#667"/></svg>正交</span>
        <span class="flex items-center gap-[2px] ml-[4px] w-[75px] h-[24px] bg-[#e5f1fb] border border-[#2f7fc8] pl-[3px]"><svg viewBox="0 0 16 16" class="w-[16px] h-[17px] shrink-0"><path d="M4 1v7M12 1v7" stroke="#844"/><path d="M3 15l-1-5 4-3 7 1 1 5-3 2z" fill="#e8c060" stroke="#875"/></svg>对象捕捉</span>
        <span class="flex items-center gap-[3px] ml-[4px]"><svg viewBox="0 0 16 16" class="w-[16px] h-[16px]"><path d="M1 2h14M1 5h14" stroke="#a05050"/><path d="M1 8h14v7H1z" fill="#fff" stroke="#555"/></svg>动态输入</span>
        <i class="h-[16px] border-l-2 border-dotted border-[#aaa] ml-[8px]"></i>
        <span class="flex items-center gap-[5px] ml-[7px]"><svg viewBox="0 0 16 16" class="w-[15px] h-[15px]"><path d="M1 1l14 14M15 1L1 15" stroke="#1f5a90" stroke-width="1.500"/></svg>交点</span>
        <span class="flex items-center gap-[4px] ml-[4px] w-[50px] h-[24px] bg-[#e5f1fb] border border-[#2f7fc8] pl-[4px]"><svg viewBox="0 0 16 16" class="w-[15px] h-[15px] shrink-0"><path d="M8 1v11M1 13h14" stroke="#1f5a90"/><rect x="6.500" y="11.500" width="3" height="3" fill="#1f5a90"/></svg>垂点</span>
        <span class="flex items-center gap-[3px] w-[51px] h-[24px] bg-[#e5f1fb] border border-[#2f7fc8] pl-[4px]"><svg viewBox="0 0 16 16" class="w-[15px] h-[15px] shrink-0"><path d="M1 8h14" stroke="#1f5a90"/><rect x="6" y="6" width="4" height="4" fill="#1f3a80"/></svg>中点</span>
        <span class="flex items-center gap-[4px] ml-[4px]"><svg viewBox="0 0 16 16" class="w-[15px] h-[15px]"><path d="M8 1l7 5-3 9H4L1 6z" fill="#fff" stroke="#1f5a90" stroke-width="1.300"/></svg>顶点</span>
        <span class="flex items-center gap-[3px] ml-[7px]"><svg viewBox="0 0 16 16" class="w-[17px] h-[17px]"><path d="M8 1v14M1 14L15 3" stroke="#1f5a90" stroke-dasharray="2 1"/></svg>坐标</span>
        <span class="w-[58px] h-[25px] bg-white ml-[12px] flex items-center justify-between pl-[3px] pr-[3px]">不偏移<svg class="w-[6px] h-[4px]"><use href="#dd"/></svg></span>
        <i class="w-px h-[18px] bg-[#bbb] ml-[5px]"></i>
        <span class="ml-[3px] text-[#999] text-[13px]">X=</span>
        <span class="w-[58px] h-[22px] ml-[6px] border border-[#888] bg-[#f4f4f4] text-[#777] flex items-center justify-end text-[13px]">0<span class="ml-[7px] w-[12px] text-[8px] leading-[9px] text-center text-[#555]">▴<br>▾</span></span>
        <span class="ml-[1px] text-[#777] text-[13px]">mm</span>
        <span class="ml-[5px] text-[#777] text-[13px]">Y=</span>
        <span class="w-[58px] h-[22px] ml-[5px] border border-[#888] bg-[#f4f4f4] text-[#777] flex items-center justify-end text-[13px]">0<span class="ml-[7px] w-[12px] text-[8px] leading-[9px] text-center text-[#555]">▴<br>▾</span></span>
        <span class="ml-[2px] text-[#777] text-[13px]">mm</span>
        <i class="w-px h-[18px] bg-[#bbb] ml-[4px]"></i>
        <i class="w-[11px] h-[11px] border border-[#888] bg-white ml-[4px]"></i>
        <span class="ml-[8px]">旋转</span>
        <span class="w-[68px] h-[22px] ml-[5px] border border-[#777] bg-[#f4f4f4] text-[#777] flex items-center justify-end text-[13px]">0.000<span class="ml-[5px] w-[12px] text-[8px] leading-[9px] text-center text-[#555]">▴<br>▾</span></span>
        <span class="ml-[3px] text-[#555]">°</span>
      </div>

      <!-- rebar panel -->
      <div class="flex-1 flex mt-[8px] min-h-0">
        <div class="w-[13px] shrink-0 flex flex-col items-center -mt-[1px]">
          <svg viewBox="0 0 11 11" class="w-[11px] h-[11px]"><path d="M.5.500h10v10H.5z" fill="#eee" stroke="#666"/><path d="M2 2l7 7M9 2L2 9" stroke="#a33"/></svg>
          <i class="w-[6px] flex-1 mt-[2px] bg-[radial-gradient(#bbb_1px,transparent_1px)] bg-[length:3px_5px]"></i>
        </div>
        <div class="flex-1 min-w-0 flex flex-col">
          <div class="h-[24px] shrink-0 bg-[#fafafa] flex items-center pl-[6px] text-[12px]">
            <svg viewBox="0 0 10 12" class="w-[10px] h-[12px]"><path d="M1 1h2v10H1zM9 1L4 6l5 5z" fill="#c8c8c8"/></svg>
            <svg viewBox="0 0 10 12" class="w-[10px] h-[12px] ml-[15px]"><path d="M8 1L3 6l5 5z" fill="#c8c8c8"/></svg>
            <svg viewBox="0 0 10 12" class="w-[10px] h-[12px] ml-[13px]"><path d="M2 1l5 5-5 5z" fill="#3a78d8"/></svg>
            <svg viewBox="0 0 10 12" class="w-[11px] h-[12px] ml-[14px]"><path d="M1 1l6 5-6 5zM8 1h2v10H8z" fill="#2e60c8"/></svg>
            <i class="w-px h-[17px] bg-[#ccc] ml-[8px]"></i>
            <svg viewBox="0 0 12 12" class="w-[12px] h-[12px] ml-[6px]"><path d="M6 1l4 5H8v5H4V6H2z" fill="#ccc"/></svg>
            <svg viewBox="0 0 12 12" class="w-[12px] h-[12px] ml-[11px]"><path d="M6 11l4-5H8V1H4v5H2z" fill="#3a78d8"/></svg>
            <i class="w-px h-[17px] bg-[#ccc] ml-[9px]"></i>
            <span class="flex items-center gap-[2px] ml-[5px] text-[#999]"><svg viewBox="0 0 18 14" class="w-[18px] h-[14px]"><path d="M1 1h6v3H1zM1 10h6v3H1zM2 4v6M9 7h7" fill="none" stroke="#aaa"/></svg>插入</span>
            <span class="flex items-center gap-[2px] ml-[7px] text-[#999]"><svg viewBox="0 0 18 14" class="w-[18px] h-[14px]"><path d="M1 1h8v3H1zM1 10h8v3H1zM4 4v6M9 7h7" fill="none" stroke="#aaa"/></svg>删除</span>
            <span class="flex items-center gap-[2px] ml-[9px]"><svg viewBox="0 0 16 14" class="w-[16px] h-[14px]"><path d="M1 1v12M4 4v9M7 1h8v2M7 7v6M10 10v3M13 12v1" stroke="#333" fill="none"/></svg>缩尺配筋</span>
            <span class="flex items-center gap-[4px] ml-[7px]"><svg viewBox="0 0 16 14" class="w-[16px] h-[14px]"><path d="M1 13l6-7 2 2-6 5z" fill="#e8b040" stroke="#654"/><path d="M8 6h7v7H8z" fill="#cfe0f8" stroke="#47a"/></svg>钢筋信息</span>
            <span class="flex items-center gap-[4px] ml-[7px]"><svg viewBox="0 0 16 14" class="w-[16px] h-[14px]"><path d="M.5.500h15v13H.5z" fill="#fff" stroke="#47a"/><path d="M.5.500h15v3H.5z" fill="#47a"/><path d="M3 7h10M3 10h6" stroke="#b84"/></svg>钢筋图库</span>
            <span class="flex items-center gap-[5px] ml-[7px]"><svg viewBox="0 0 16 14" class="w-[16px] h-[14px]"><path d="M.5 1.500h9v11h-9z" fill="#eef" stroke="#778"/><path d="M6 5h4V2l6 5-6 5V9H6z" fill="#3a78d8"/></svg>其他</span>
            <svg class="w-[6px] h-[4px] ml-[3px]"><use href="#dd"/></svg>
            <span class="ml-[7px]">关闭</span>
            <i class="w-px h-[17px] bg-[#ccc] ml-[7px]"></i>
            <span class="ml-[7px]">单构件钢筋总重(kg)：94.692</span>
          </div>
          <div class="h-[1px] shrink-0"></div>
          <!-- rebar grid -->
          <div class="h-[172px] shrink-0 bg-white border border-[#aaa] relative flex flex-col overflow-hidden">
            <div class="flex-1 overflow-hidden">
              <table class="table-fixed border-collapse w-[1116px] font-['Noto_Sans_Mono_CJK_SC','Noto_Sans_CJK_SC',monospace] text-[12px] leading-[13px]">
                <colgroup><col class="w-[33px]"><col class="w-[72px]"><col class="w-[56px]"><col class="w-[36px]"><col class="w-[33px]"><col class="w-[201px]"><col class="w-[167px]"><col class="w-[155px]"><col class="w-[61px]"><col class="w-[38px]"><col class="w-[40px]"><col class="w-[48px]"><col class="w-[61px]"><col class="w-[62px]"><col class="w-[53px]"></colgroup>
                <thead>
                  <tr class="h-[19px] bg-linear-to-b from-white to-[#ececec]">
                    <th class="border border-[#b4b4b4] font-normal"></th><th class="border border-[#b4b4b4] font-normal">筋号</th><th class="border border-[#b4b4b4] font-normal bg-linear-to-b from-[#ffe4b0] to-[#fcc878]">直径(mm)</th><th class="border border-[#b4b4b4] font-normal">级别</th><th class="border border-[#b4b4b4] font-normal">图号</th><th class="border border-[#b4b4b4] font-normal">图形</th><th class="border border-[#b4b4b4] font-normal">计算公式</th><th class="border border-[#b4b4b4] font-normal">公式描述</th><th class="border border-[#b4b4b4] font-normal">长度(mm)</th><th class="border border-[#b4b4b4] font-normal">根数</th><th class="border border-[#b4b4b4] font-normal">搭接</th><th class="border border-[#b4b4b4] font-normal">损耗(%)</th><th class="border border-[#b4b4b4] font-normal">单重(kg)</th><th class="border border-[#b4b4b4] font-normal">总重(kg)</th><th class="border border-[#b4b4b4] font-normal overflow-hidden whitespace-nowrap text-left pl-[7px]">钢筋归类</th>
                  </tr>
                </thead>
                <tbody>
                  <tr class="h-[29px] bg-[#c9fed3]">
                    <td class="border border-[#b4b4b4] text-center bg-[#fdd088] text-[#a01010]">1*</td><td class="border border-[#b4b4b4] border-r-black px-[2px] whitespace-normal">连梁上部纵筋.1</td><td class="border border-[#b4b4b4] bg-[#ade9d5] px-[2px]">25</td><td class="border border-[#b4b4b4] text-center"><span class="border-b border-black leading-[10px] inline-block">Φ</span></td><td class="border border-[#b4b4b4] px-[2px]">1</td>
                    <td class="border border-[#b4b4b4]"><div class="w-[150px] mx-auto mb-[3px] flex flex-col items-center text-[#f00000] leading-[13px]">4550<i class="w-[150px] h-[2px] bg-black"></i></div></td>
                    <td class="border border-[#b4b4b4] px-[2px]">2700+37*d+37*d</td><td class="border border-[#b4b4b4] px-[2px]">净长+直锚+直锚</td><td class="border border-[#b4b4b4] px-[2px]">4550</td><td class="border border-[#b4b4b4] px-[2px]">2</td><td class="border border-[#b4b4b4] px-[2px]">0</td><td class="border border-[#b4b4b4] px-[2px]">0</td><td class="border border-[#b4b4b4] px-[2px]">17.517</td><td class="border border-[#b4b4b4] px-[2px]">35.035</td><td class="border border-[#b4b4b4] px-[2px]">直筋</td>
                  </tr>
                  <tr class="h-[29px] bg-[#c9fed3]">
                    <td class="border border-[#b4b4b4] text-center bg-[#f4f4f4]">2</td><td class="border border-[#b4b4b4] border-r-black px-[2px] whitespace-normal">连梁下部纵筋.1</td><td class="border border-[#b4b4b4] px-[2px]">25</td><td class="border border-[#b4b4b4] text-center"><span class="border-b border-black leading-[10px] inline-block">Φ</span></td><td class="border border-[#b4b4b4] px-[2px]">1</td>
                    <td class="border border-[#b4b4b4]"><div class="w-[150px] mx-auto mb-[3px] flex flex-col items-center text-[#f00000] leading-[13px]">4550<i class="w-[150px] h-[2px] bg-black"></i></div></td>
                    <td class="border border-[#b4b4b4] px-[2px]">2700+37*d+37*d</td><td class="border border-[#b4b4b4] px-[2px]">净长+直锚+直锚</td><td class="border border-[#b4b4b4] px-[2px]">4550</td><td class="border border-[#b4b4b4] px-[2px]">2</td><td class="border border-[#b4b4b4] px-[2px]">0</td><td class="border border-[#b4b4b4] px-[2px]">0</td><td class="border border-[#b4b4b4] px-[2px]">17.517</td><td class="border border-[#b4b4b4] px-[2px]">35.035</td><td class="border border-[#b4b4b4] px-[2px]">直筋</td>
                  </tr>
                  <tr class="h-[34px] bg-[#c9fed3]">
                    <td class="border border-[#b4b4b4] text-center bg-[#f4f4f4]">3</td><td class="border border-[#b4b4b4] border-r-black px-[2px]">连梁箍筋.1</td><td class="border border-[#b4b4b4] px-[2px]">10</td><td class="border border-[#b4b4b4] text-center"><span class="border-b border-black leading-[10px] inline-block">Φ</span></td><td class="border border-[#b4b4b4] px-[2px]">195</td>
                    <td class="border border-[#b4b4b4]"><div class="flex items-center pl-[55px]"><span>460</span><span class="ml-[9px] w-[35px] h-[23px] border-2 border-black rounded-[2px] text-[#f00000] flex items-end pl-[1px] text-[13px] leading-[16px] relative">160<svg viewBox="0 0 14 14" class="absolute right-0 top-0 w-[14px] h-[14px]"><path d="M.5 7.500L8 1M7 13l7-7" stroke="#000" stroke-width="2" fill="none"/></svg></span></div></td>
                    <td class="border border-[#b4b4b4] px-[2px] leading-[12px]">2*((200-2*20)+(500-2*20))+<br>2*(11.9*d)</td><td class="border border-[#b4b4b4] px-[2px]"></td><td class="border border-[#b4b4b4] px-[2px]">1478</td><td class="border border-[#b4b4b4] px-[2px]">27</td><td class="border border-[#b4b4b4] px-[2px]">0</td><td class="border border-[#b4b4b4] px-[2px]">0</td><td class="border border-[#b4b4b4] px-[2px]">0.912</td><td class="border border-[#b4b4b4] px-[2px]">24.622</td><td class="border border-[#b4b4b4] px-[2px]">箍筋</td>
                  </tr>
                  <tr class="h-[17px]">
                    <td class="border border-[#b4b4b4] text-center bg-[#f4f4f4]">4</td><td class="border border-[#b4b4b4] border-r-black"></td><td class="border border-[#b4b4b4]"></td><td class="border border-[#b4b4b4]"></td><td class="border border-[#b4b4b4]"></td><td class="border border-[#b4b4b4]"></td><td class="border border-[#b4b4b4]"></td><td class="border border-[#b4b4b4]"></td><td class="border border-[#b4b4b4]"></td><td class="border border-[#b4b4b4]"></td><td class="border border-[#b4b4b4]"></td><td class="border border-[#b4b4b4]"></td><td class="border border-[#b4b4b4]"></td><td class="border border-[#b4b4b4]"></td><td class="border border-[#b4b4b4]"></td>
                  </tr>
                </tbody>
              </table>
            </div>
            <div class="h-[16px] shrink-0 bg-[#f0f0f0] flex items-center">
              <span class="w-[17px] flex justify-center"><svg viewBox="0 0 6 10" class="w-[5px] h-[8px] rotate-180"><path d="M1 1l4 4-4 4" fill="none" stroke="#444" stroke-width="1.600"/></svg></span>
              <i class="w-[718px] h-[16px] bg-[#c8c8c8]"></i>
              <span class="ml-auto w-[17px] flex justify-center"><svg viewBox="0 0 6 10" class="w-[5px] h-[8px]"><path d="M1 1l4 4-4 4" fill="none" stroke="#444" stroke-width="1.600"/></svg></span>
            </div>
          </div>
        </div>
      </div>
    </div>
  </div>

  <!-- status bar -->
  <div class="h-[22px] shrink-0 flex items-center gap-[2px] pt-[2px] font-['Noto_Sans_Mono_CJK_SC','Noto_Sans_CJK_SC',monospace] text-[12px] whitespace-nowrap">
    <span class="w-[148px] h-[19px] bg-[#f7f7f7] border border-[#ddd] flex items-center pl-[1px] text-[11px]">X=79909 Y=6063</span>
    <span class="w-[78px] h-[19px] bg-[#f7f7f7] border border-[#ddd] flex items-center pl-[1px]">层高:4.5m</span>
    <span class="w-[98px] h-[19px] bg-[#f7f7f7] border border-[#ddd] flex items-center pl-[1px]">底标高:-0.03m</span>
    <span class="w-[48px] h-[19px] bg-[#f7f7f7] border border-[#ddd] flex items-center pl-[1px]">1(1)</span>
    <span class="flex-1 h-[19px] bg-[#f7f7f7] border border-[#ddd] flex items-center pl-[1px]">按鼠标左键指定第一个角点，或拾取构件图元</span>
  </div>

  <!-- taskbar -->
  <div class="h-[40px] shrink-0 bg-[#04090e] flex items-center text-white relative whitespace-nowrap">
    <div class="w-[48px] h-full bg-black flex items-center justify-center">
      <svg viewBox="0 0 16 16" class="w-[16px] h-[16px]"><path d="M0 2.500l7-1v6H0zM8 1.300l8-1.300v7.500H8zM0 8.500h7v6l-7-1zM8 8.500h8V16l-8-1.300z" fill="#fff"/></svg>
    </div>
    <div class="w-[344px] h-full bg-[#303030] flex items-center pl-[9px] text-[#8c8c8c] text-[13px]">
      <i class="w-[21px] h-[21px] rounded-full border-[3px] border-[#d8d8d8]"></i>
      <span class="ml-[6px]">在这里输入你要搜索的内容</span>
      <svg viewBox="0 0 10 18" class="w-[10px] h-[18px] ml-auto mr-[16px]"><path d="M2.500 1h5v10h-5zM.5 8c0 6 9 6 9 0M5 13v4M2 17h6" fill="none" stroke="#999"/></svg>
    </div>
    <div class="flex items-center h-full">
      <svg viewBox="0 0 22 22" class="w-[22px] h-[22px] ml-[15px]"><path d="M10 10C3 11 0 7 2 3c3-4 9-2 8 7zM12 10c-1-7 3-10 7-8 4 3 2 9-7 8zM12 12c7-1 10 3 8 7-3 4-9 2-8-7zM10 12c1 7-3 10-7 8-4-3-2-9 7-8z" fill="#e4e4e4"/></svg>
      <svg viewBox="0 0 28 24" class="w-[28px] h-[24px] ml-[27px]"><path d="M14 11a7 7 0 1 0 3 7c-1-5-8-5-8-1s5 3 4 1" fill="none" stroke="#bbb" stroke-width="1.300"/><path d="M15 11c1-1 1-3 2-6 1-4 6-4 7 0 1 3 1 5 2 6l1 1H14z" fill="#e8a820"/><circle cx="20.500" cy="14" r="1.500" fill="#e8a820"/></svg>
      <i class="w-px h-[22px] bg-[#444] ml-[17px]"></i>
      <svg viewBox="0 0 24 24" class="w-[22px] h-[24px] ml-[29px]"><path d="M3 12h18c0-6-4-10-9-10S3 6 3 13s5 9 10 9c3 0 5-1 7-2" fill="none" stroke="#1e88e0" stroke-width="4.500"/></svg>
      <svg viewBox="0 0 20 22" class="w-[20px] h-[22px] ml-[27px]"><path d="M1 5h18v16H1z" fill="#fff"/><path d="M6 5c0-6 8-6 8 0" fill="none" stroke="#fff" stroke-width="1.500"/><path d="M6 9h3.500v3.500H6zM10.500 9H14v3.500h-3.500zM6 13.500h3.500V17H6zM10.500 13.500H14V17h-3.500z" fill="#111"/></svg>
      <svg viewBox="0 0 22 22" class="w-[22px] h-[22px] ml-[29px]"><path d="M1 3h8l2 2h10v16H1z" fill="#f0d070"/><path d="M1 8h20" stroke="#fff"/><path d="M8 21v-6l3-3 3 3v6z" fill="#30a8e0"/></svg>
      <svg viewBox="0 0 24 24" class="w-[24px] h-[24px] ml-[25px]"><path d="M20 5C15 0 4 2 4 13c0 8 9 10 14 6v-7h-6" fill="none" stroke="#1e88d8" stroke-width="5"/></svg>
      <svg viewBox="0 0 22 22" class="w-[22px] h-[22px] ml-[26px]"><circle cx="11" cy="11" r="10" fill="#7cd040" stroke="#2e8a2e"/><path d="M5 11h12M6 8c3-3 7-3 10 0M6 14c3 3 7 3 10 0" stroke="#fff" stroke-width="1.800" fill="none"/></svg>
      <svg viewBox="0 0 24 24" class="w-[24px] h-[24px] ml-[27px]"><rect x="1" y="1" width="22" height="22" rx="2" fill="#e8a020"/><path d="M5 5h13v15H5z" fill="#fff3d0"/><path d="M7 9h8M7 12h8M7 15h6" stroke="#a86820"/><path d="M20 2l-8 12" stroke="#c83010" stroke-width="2"/></svg>
      <span class="ml-[12px] w-[48px] h-full bg-[#3a4045] flex items-center justify-center">
        <span class="w-[24px] h-[24px] rounded-[4px] bg-[#1490f0] flex items-center justify-center"><svg viewBox="0 0 14 14" class="w-[15px] h-[15px]"><path d="M7 1v12M1 6h3c2 0 3-1 3-2M13 6h-3C8 6 7 5 7 4" stroke="#fff" stroke-width="1.800" fill="none"/></svg></span>
      </span>
    </div>
    <!-- running-app underlines -->
    <i class="absolute left-[663px] bottom-0 w-[45px] h-[2px] bg-[#76b9ed]"></i>
    <i class="absolute left-[717px] bottom-0 w-[40px] h-[2px] bg-[#76b9ed]"></i>
    <i class="absolute left-[766px] bottom-0 w-[40px] h-[2px] bg-[#76b9ed]"></i>
    <i class="absolute left-[811px] bottom-0 w-[48px] h-[2px] bg-[#76b9ed]"></i>
    <div class="ml-auto flex items-center h-full">
      <span class="flex flex-col items-center text-[12px] leading-[18px] w-[48px]"><span>38%</span><span>CPU使用</span></span>
      <svg viewBox="0 0 12 7" class="w-[12px] h-[7px] ml-[20px]"><path d="M.5 6.500L6 1l5.500 5.500" fill="none" stroke="#fff"/></svg>
      <svg viewBox="0 0 16 12" class="w-[16px] h-[12px] ml-[11px]"><path d="M2 3h13v8H2z" fill="none" stroke="#fff"/><path d="M4 5h9v4H4z" fill="#fff"/><path d="M3 0v3M7 0v3" stroke="#fff"/></svg>
      <svg viewBox="0 0 14 14" class="w-[14px] h-[14px] ml-[9px]"><path d="M1 13C1 6 6 1 13 1M4 13c0-5 4-9 9-9M7 13c0-3 3-6 6-6" fill="none" stroke="#bbb"/><circle cx="11" cy="11" r="2" fill="#ddd"/></svg>
      <svg viewBox="0 0 16 14" class="w-[16px] h-[14px] ml-[8px]"><path d="M1 5h3l4-4v12l-4-4H1z" fill="none" stroke="#ddd"/><path d="M11 4c1 2 1 4 0 6M13 2c2 3 2 7 0 10" fill="none" stroke="#ddd"/></svg>
      <span class="ml-[8px] text-[14px]">中</span>
      <span class="ml-[15px] w-[14px] h-[16px] bg-[#f0501e] rounded-[2px] flex items-center justify-center text-[12px] font-bold leading-none">S</span>
      <span class="ml-[18px] flex flex-col items-center leading-[18px] text-[12.500px] w-[60px]"><span>13:35</span><span>2017/8/22</span></span>
      <span class="ml-[25px] mr-[21px] relative w-[14px] h-[14px]">
        <svg viewBox="0 0 14 14" class="w-[14px] h-[14px]"><path d="M0 0h14v10H6l-3 3v-3H0z" fill="#fff"/><path d="M3 3h8M3 6h8" stroke="#222"/></svg>
        <span class="absolute -right-[6px] -bottom-[7px] w-[16px] h-[16px] rounded-full bg-[#333] border border-[#888] text-[11px] font-bold flex items-center justify-center">2</span>
      </span>
    </div>
  </div>

  <!-- network speed widget floats over the menu -->
  <div class="absolute left-[735px] top-[3px] w-[128px] h-[50px]">
    <div class="absolute left-[35px] top-[6px] w-[92px] h-[39px] rounded-full bg-linear-to-b from-[#f8f8f8] to-[#cfcfcf] border border-[#bbb] shadow-md"></div>
    <div class="absolute left-0 top-0 w-[46px] h-[49px] rounded-full bg-[linear-gradient(#1f6a44_0%,#1f6a44_30%,#2fb24c_32%,#2cae4b_100%)] border-[3px] border-[#dcdcdc] shadow-md flex items-center justify-center text-white text-[14px]">64%</div>
    <svg viewBox="0 0 8 10" class="absolute left-[51px] top-[13px] w-[8px] h-[10px]"><path d="M4 0l4 5H5.500v5h-3V5H0z" fill="#e25a3c"/></svg>
    <svg viewBox="0 0 8 10" class="absolute left-[51px] top-[28px] w-[8px] h-[10px]"><path d="M4 10l4-5H5.500V0h-3v5H0z" fill="#2ca24a"/></svg>
    <span class="absolute left-[79px] top-[12px] text-[10px] leading-[14px]">0K/s</span>
    <span class="absolute left-[79px] top-[26px] text-[10px] leading-[14px]">0K/s</span>
    <span class="absolute left-[102px] top-[18px] w-[17px] h-[17px] rounded-full bg-[#2e80e0] border-2 border-[#c8d8ee] text-white flex items-center justify-center text-[13px] font-bold leading-none">+</span>
  </div>

  <!-- sogou input bar floats above the status bar -->
  <div class="absolute left-[1182px] top-[705px] w-[184px] h-[23px] bg-white border-y border-[#d8e4f0] flex items-center text-[#1a78c8]">
    <span class="w-[25px] h-[25px] -mt-[3px] -rotate-6 bg-[#f0501e] rounded-[3px] text-white text-[20px] font-bold flex items-center justify-center leading-none">S</span>
    <span class="ml-[8px] text-[15px] font-bold">中</span>
    <span class="ml-[8px] text-[13px] font-bold">°,</span>
    <svg viewBox="0 0 12 18" class="w-[12px] h-[19px] ml-[9px]"><rect x="3" y="0" width="6" height="12" rx="3" fill="#1a78c8"/><path d="M1 9c0 5 10 5 10 0M6 14v3M2 17h8" stroke="#1a78c8" fill="none" stroke-width="1.500"/></svg>
    <svg viewBox="0 0 16 14" class="w-[16px] h-[14px] ml-[7px]"><rect width="16" height="14" rx="1.500" fill="#1a78c8"/><path d="M2 4h12M2 7h12M4 10.500h8" stroke="#fff" stroke-dasharray="1.500 1"/></svg>
    <span class="relative ml-[9px] w-[14px] h-[18px]">
      <svg viewBox="0 0 14 18" class="w-[14px] h-[18px]"><circle cx="6" cy="4" r="3.500" fill="#b8c8d8"/><path d="M0 15c0-5 3-7 6-7s6 2 6 7z" fill="#b8c8d8"/></svg>
      <span class="absolute -right-[2px] bottom-0 text-[7px] leading-[8px] font-bold text-[#8a9aa8] bg-white">17</span>
    </span>
    <svg viewBox="0 0 14 16" class="w-[14px] h-[16px] ml-[8px]"><path d="M4 0L0 3l2 3 1-1v11h8V5l1 1 2-3-4-3H8L7 1 6 0z" fill="#1a78c8"/></svg>
    <svg viewBox="0 0 14 16" class="w-[14px] h-[16px] ml-[9px]"><path d="M1 15l6-7c-1-4 2-7 6-7l-3 3 1 2 2 1 1-3c1 4-3 7-6 6l-5 6z" fill="#1a78c8"/></svg>
  </div>

  <!-- red markup ellipses drawn over the screenshot -->
  <svg viewBox="0 0 1366 768" class="absolute inset-0 w-[1366px] h-[768px] pointer-events-none">
    <ellipse cx="768" cy="403" rx="289" ry="69" fill="none" stroke="#f00000" stroke-width="3"/>
    <ellipse cx="447" cy="588" rx="250" ry="85" fill="none" stroke="#f00000" stroke-width="3"/>
  </svg>
</div>
</body>
</html>
